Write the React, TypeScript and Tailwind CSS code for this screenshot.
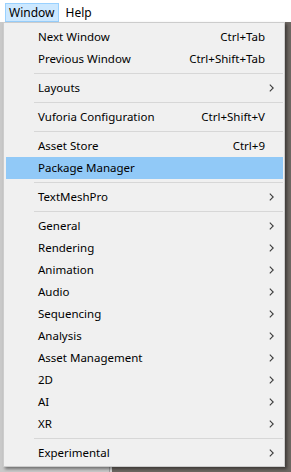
import React from "react";

type Item =
  | { type: "sep" }
  | { type: "item"; label: string; shortcut?: string; sub?: boolean; hl?: boolean };

const items: Item[] = [
  { type: "item", label: "Next Window", shortcut: "Ctrl+Tab" },
  { type: "item", label: "Previous Window", shortcut: "Ctrl+Shift+Tab" },
  { type: "sep" },
  { type: "item", label: "Layouts", sub: true },
  { type: "sep" },
  { type: "item", label: "Vuforia Configuration", shortcut: "Ctrl+Shift+V" },
  { type: "sep" },
  { type: "item", label: "Asset Store", shortcut: "Ctrl+9" },
  { type: "item", label: "Package Manager", hl: true },
  { type: "sep" },
  { type: "item", label: "TextMeshPro", sub: true },
  { type: "sep" },
  { type: "item", label: "General", sub: true },
  { type: "item", label: "Rendering", sub: true },
  { type: "item", label: "Animation", sub: true },
  { type: "item", label: "Audio", sub: true },
  { type: "item", label: "Sequencing", sub: true },
  { type: "item", label: "Analysis", sub: true },
  { type: "item", label: "Asset Management", sub: true },
  { type: "item", label: "2D", sub: true },
  { type: "item", label: "AI", sub: true },
  { type: "item", label: "XR", sub: true },
  { type: "sep" },
  { type: "item", label: "Experimental", sub: true },
];

function Chevron() {
  return (
    <svg width="5" height="8" viewBox="0 0 5 8" className="block">
      <path d="M0.8 0.6 L4.2 4 L0.8 7.4" fill="none" stroke="#3c3c3c" strokeWidth="1.1" />
    </svg>
  );
}

export default function App() {
  return (
    <div
      className="relative w-[291px] h-[472px] overflow-hidden bg-white text-black"
      style={{ fontFamily: '"Noto Sans", "Open Sans", sans-serif' }}
    >
      {/* menu bar */}
      <div className="h-[22px] flex items-start bg-white text-[12px]">
        <div className="ml-[5px] mt-[3px] h-[19px] px-[3px] flex items-center bg-[#cce8ff] border border-[#99d1ff]">
          Window
        </div>
        <div className="ml-[6px] mt-[3px] h-[19px] px-[1px] flex items-center">Help</div>
      </div>
      {/* background content */}
      <div className="flex h-[450px]">
        <div className="w-[110px] bg-[#c9c9c9] border-r border-[#a0a0a0]" />
        <div className="w-[2px] bg-[#d8d8d8]" />
        <div className="flex-1 bg-[#6d6762]" />
      </div>
      {/* dropdown */}
      <div className="absolute left-[3px] top-[22px] w-[282px] bg-[#f0f0f0] border border-[#cccccc] pt-[3px] pb-[2px] text-[11.5px] shadow-[2px_2px_3px_rgba(0,0,0,0.45)]">
        {items.map((it, i) =>
          it.type === "sep" ? (
            <div key={i} className="h-[7px] flex items-center pl-[30px] pr-[1px]">
              <div className="h-px w-full bg-[#d7d7d7]" />
            </div>
          ) : (
            <div
              key={i}
              className={`h-[22px] flex items-center ml-[2px] mr-[1px] pl-[32px] ${
                it.hl ? "bg-[#91c9f7]" : ""
              }`}
            >
              <span className="flex-1 leading-none">{it.label}</span>
              {it.shortcut && <span className="mr-[18px] leading-none">{it.shortcut}</span>}
              {it.sub && (
                <span className="mr-[9px]">
                  <Chevron />
                </span>
              )}
            </div>
          )
        )}
      </div>
    </div>
  );
}
